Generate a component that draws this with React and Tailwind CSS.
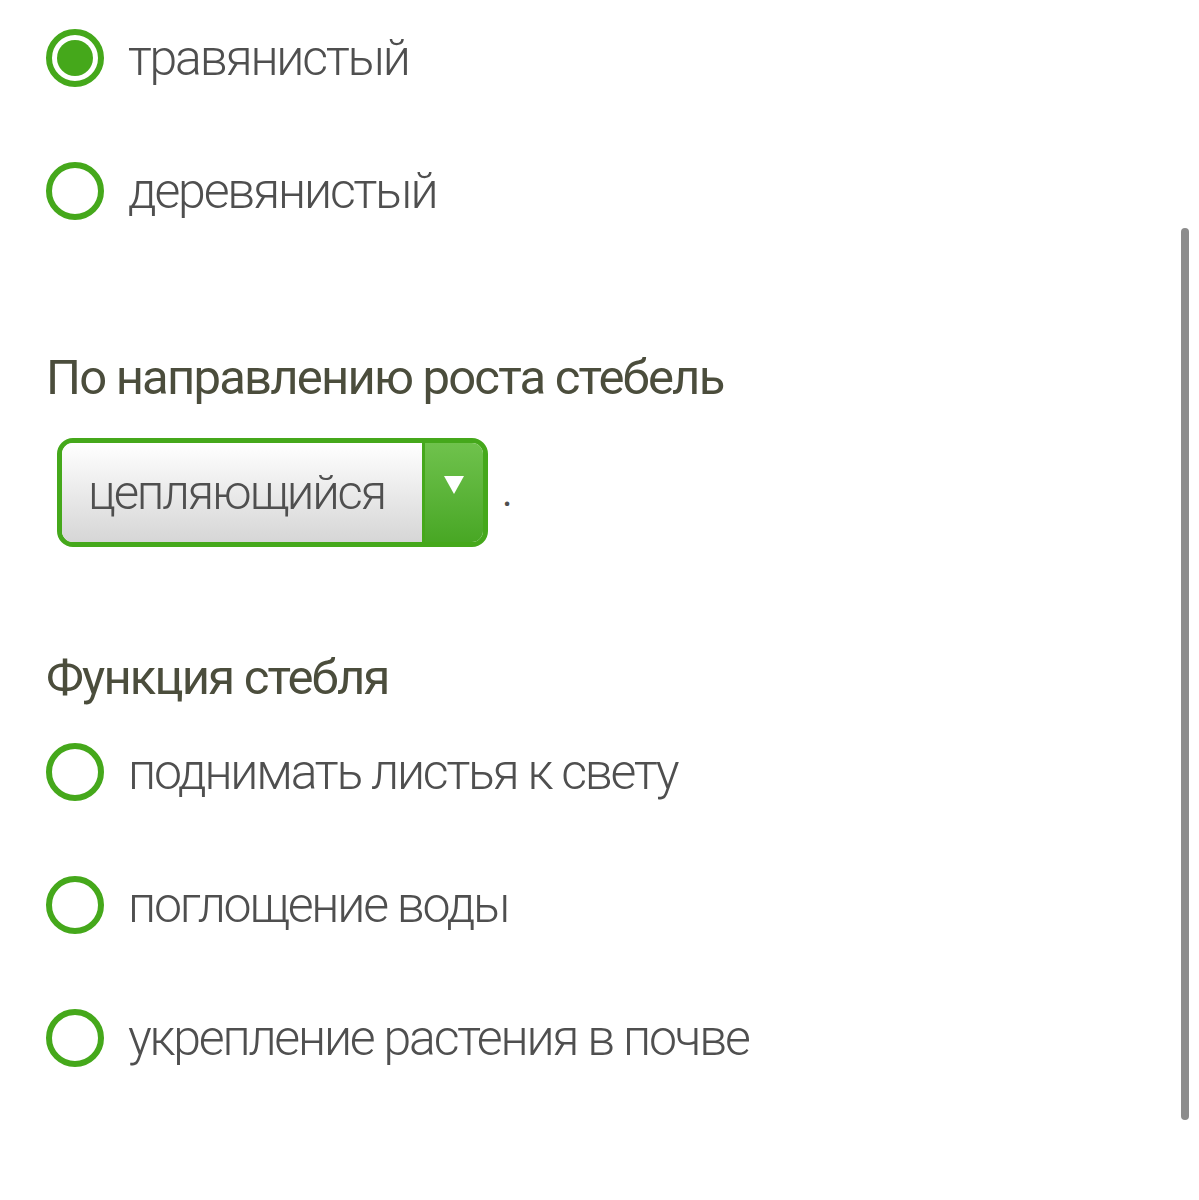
const font = { fontFamily: "Roboto, 'Noto Sans', sans-serif" };

function Radio({ checked, label, className = "" }) {
  return (
    <div className={`flex h-[58px] items-center gap-[24px] ${className}`}>
      <span className="flex h-[58px] w-[58px] shrink-0 items-center justify-center rounded-full border-[6px] border-[#45a81b] bg-white">
        {checked && <span className="h-[36px] w-[36px] rounded-full bg-[#45a81b]" />}
      </span>
      <span className="text-[50px] font-light leading-none tracking-[-2.2px] text-[#4f4f4f]">{label}</span>
    </div>
  );
}

function Select({ value }) {
  return (
    <div className="flex items-center gap-[14px]">
      <div className="flex h-[109px] w-[431px] overflow-hidden rounded-[16px] border-[5px] border-[#45a81b]">
        <div className="flex flex-1 items-center bg-gradient-to-b from-white to-[#d6d6d6] pl-[26px]">
          <span className="text-[49px] font-light leading-none tracking-[-2.2px] text-[#4f4f4f]">{value}</span>
        </div>
        <div className="flex w-[61px] items-start justify-center border-l-[3px] border-[#45a81b] bg-gradient-to-b from-[#6fc24c] to-[#48a724] pt-[32px]">
          <svg width="22" height="20" viewBox="0 0 22 20">
            <path d="M1 1 H21 L11 19 Z" fill="#fff" />
          </svg>
        </div>
      </div>
      <span className="text-[40px] leading-none text-[#4f4f4f]">.</span>
    </div>
  );
}

export default function App() {
  return (
    <div className="relative h-[1200px] w-full bg-white" style={font}>
      <div className="flex flex-col pl-[46px]">
        <Radio checked label="травянистый" className="mt-[29px]" />
        <Radio label="деревянистый" className="mt-[75px]" />

        <h2 className="mt-[128px] h-[60px] text-[49px] font-normal leading-[60px] tracking-[-1.8px] text-[#4b4d3c]">
          По направлению роста стебель
        </h2>
        <div className="mt-[30px] pl-[11px]">
          <Select value="цепляющийся" />
        </div>

        <h2 className="mt-[101px] h-[60px] text-[49px] font-normal leading-[60px] tracking-[-1.8px] text-[#4b4d3c]">
          Функция стебля
        </h2>
        <Radio label="поднимать листья к свету" className="mt-[35px]" />
        <Radio label="поглощение воды" className="mt-[75px]" />
        <Radio label="укрепление растения в почве" className="mt-[75px]" />
      </div>
      <div className="absolute right-[10px] top-[228px] h-[892px] w-[8px] rounded-full bg-[#8c8c8c]" />
    </div>
  );
}
